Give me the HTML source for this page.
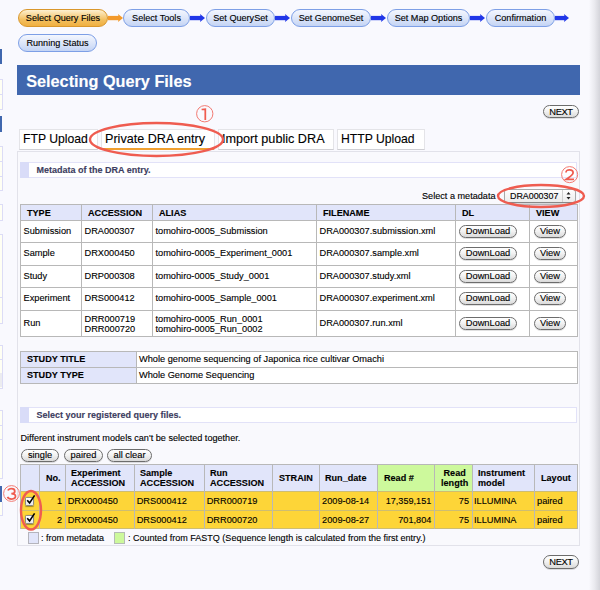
<!DOCTYPE html>
<html><head><meta charset="utf-8"><style>
html,body{margin:0;padding:0;}
body{width:600px;height:590px;overflow:hidden;position:relative;background:#f9f9fe;font-family:'Liberation Sans', sans-serif;}
div{box-sizing:content-box;-webkit-text-stroke:0.12px currentColor;}
</style></head><body>
<div style="position:absolute;left:0px;top:49px;width:2.4px;height:15px;background:#4067ae"></div><div style="position:absolute;left:0px;top:79px;width:2.4px;height:29px;background:#fffff4;border-right:1px solid #dcdcf6;border-top:1px solid #dcdcf6;border-bottom:1px solid #dcdcf6"></div><div style="position:absolute;left:0px;top:94px;width:2.4px;height:1px;background:#dcdcf6"></div><div style="position:absolute;left:0px;top:116px;width:2.4px;height:15.5px;background:#4067ae"></div><div style="position:absolute;left:0px;top:146px;width:2.4px;height:43px;background:#fffff4;border-right:1px solid #dcdcf6;border-top:1px solid #dcdcf6;border-bottom:1px solid #dcdcf6"></div><div style="position:absolute;left:0px;top:204px;width:2.4px;height:15px;background:#fffff4;border-right:1px solid #dcdcf6;border-top:1px solid #dcdcf6;border-bottom:1px solid #dcdcf6"></div><div style="position:absolute;left:0px;top:233.5px;width:2.4px;height:88.5px;background:#fffff4;border-right:1px solid #dcdcf6;border-top:1px solid #dcdcf6;border-bottom:1px solid #dcdcf6"></div><div style="position:absolute;left:0px;top:344.5px;width:2.4px;height:42.5px;background:#fffff4;border-right:1px solid #dcdcf6;border-top:1px solid #dcdcf6;border-bottom:1px solid #dcdcf6"></div><div style="position:absolute;left:0px;top:409.5px;width:2.4px;height:67.5px;background:#fffff4;border-right:1px solid #dcdcf6;border-top:1px solid #dcdcf6;border-bottom:1px solid #dcdcf6"></div><div style="position:absolute;left:0px;top:161px;width:2.4px;height:1px;background:#dcdcf6"></div><div style="position:absolute;left:0px;top:175.5px;width:2.4px;height:1px;background:#dcdcf6"></div><div style="position:absolute;left:0px;top:297px;width:2.4px;height:1px;background:#dcdcf6"></div><div style="position:absolute;left:0px;top:359px;width:2.4px;height:1px;background:#dcdcf6"></div><div style="position:absolute;left:0px;top:424.5px;width:2.4px;height:1px;background:#dcdcf6"></div><div style="position:absolute;left:0px;top:438.5px;width:2.4px;height:1px;background:#dcdcf6"></div><div style="position:absolute;left:0px;top:373px;width:2.4px;height:14px;background:#ececf0"></div><div style="position:absolute;left:0px;top:485.5px;width:2.4px;height:16px;background:#4067ae"></div><div style="position:absolute;left:0px;top:502px;width:2.4px;height:13px;background:#fffff4;border-right:1px solid #dcdcf6;border-bottom:1px solid #dcdcf6"></div><div style="position:absolute;left:18px;top:9px;width:88px;height:16px;border-radius:9.0px;background:linear-gradient(#fdf0d0,#f3c061 60%,#f0b040);border:1px solid #d9972c;font-size:9.1px;line-height:16px;text-align:center;color:#000;white-space:nowrap">Select Query Files</div><svg style="position:absolute;left:108px;top:12.8px" width="15" height="10"><rect x="0" y="2.9" width="11" height="4.3" fill="#f39a2c"/><path d="M10 0.9 L15 5 L10 9.1 L10.8 5 Z" fill="#f39a2c"/></svg><div style="position:absolute;left:123px;top:9px;width:65px;height:16px;border-radius:9.0px;background:linear-gradient(#f4f7fe,#d6e1f8 65%,#c4d4f4);border:1px solid #7d9fe6;font-size:9.1px;line-height:16px;text-align:center;color:#000;white-space:nowrap">Select Tools</div><svg style="position:absolute;left:190px;top:12.8px" width="15" height="10"><rect x="0" y="2.9" width="11" height="4.3" fill="#2137e8"/><path d="M10 0.9 L15 5 L10 9.1 L10.8 5 Z" fill="#2137e8"/></svg><div style="position:absolute;left:206px;top:9px;width:67px;height:16px;border-radius:9.0px;background:linear-gradient(#f4f7fe,#d6e1f8 65%,#c4d4f4);border:1px solid #7d9fe6;font-size:9.1px;line-height:16px;text-align:center;color:#000;white-space:nowrap">Set QuerySet</div><svg style="position:absolute;left:275px;top:12.8px" width="15" height="10"><rect x="0" y="2.9" width="11" height="4.3" fill="#2137e8"/><path d="M10 0.9 L15 5 L10 9.1 L10.8 5 Z" fill="#2137e8"/></svg><div style="position:absolute;left:291px;top:9px;width:78px;height:16px;border-radius:9.0px;background:linear-gradient(#f4f7fe,#d6e1f8 65%,#c4d4f4);border:1px solid #7d9fe6;font-size:9.1px;line-height:16px;text-align:center;color:#000;white-space:nowrap">Set GenomeSet</div><svg style="position:absolute;left:371px;top:12.8px" width="15" height="10"><rect x="0" y="2.9" width="11" height="4.3" fill="#2137e8"/><path d="M10 0.9 L15 5 L10 9.1 L10.8 5 Z" fill="#2137e8"/></svg><div style="position:absolute;left:387px;top:9px;width:81px;height:16px;border-radius:9.0px;background:linear-gradient(#f4f7fe,#d6e1f8 65%,#c4d4f4);border:1px solid #7d9fe6;font-size:9.1px;line-height:16px;text-align:center;color:#000;white-space:nowrap">Set Map Options</div><svg style="position:absolute;left:470px;top:12.8px" width="15" height="10"><rect x="0" y="2.9" width="11" height="4.3" fill="#2137e8"/><path d="M10 0.9 L15 5 L10 9.1 L10.8 5 Z" fill="#2137e8"/></svg><div style="position:absolute;left:486px;top:9px;width:67px;height:16px;border-radius:9.0px;background:linear-gradient(#f4f7fe,#d6e1f8 65%,#c4d4f4);border:1px solid #7d9fe6;font-size:9.1px;line-height:16px;text-align:center;color:#000;white-space:nowrap">Confirmation</div><svg style="position:absolute;left:555px;top:12.8px" width="14" height="10"><rect x="0" y="2.9" width="10" height="4.3" fill="#2137e8"/><path d="M9 0.9 L14 5 L9 9.1 L9.8 5 Z" fill="#2137e8"/></svg><div style="position:absolute;left:18px;top:34px;width:77px;height:16px;border-radius:9.0px;background:linear-gradient(#f4f7fe,#d6e1f8 65%,#c4d4f4);border:1px solid #7d9fe6;font-size:9.1px;line-height:16px;text-align:center;color:#000;white-space:nowrap">Running Status</div><div style="position:absolute;left:17px;top:65px;width:563px;height:30px;background:#4067ae"></div><div style="position:absolute;left:26.2px;top:73.4px;font-size:16.25px;line-height:16.25px;font-weight:bold;color:#fff;white-space:nowrap;">Selecting Query Files</div><div style="position:absolute;left:543px;top:105px;width:34px;height:11px;border-radius:6.5px;background:linear-gradient(#ffffff,#f3f3f3 45%,#dadada);border:1px solid #6c6c6c;box-shadow:0 1px 0 rgba(0,0,0,0.12);font-size:9.4px;line-height:11px;text-align:center;color:#000;white-space:nowrap"><span style="letter-spacing:-0.4px;position:relative;top:0.3px">NEXT</span></div><div style="position:absolute;left:19px;top:128.5px;width:74px;height:19px;background:#fff;border:1px solid #e4e4e8;border-bottom:1px solid #cfcfd4;font-size:12.2px;line-height:18px;padding-left:3px;box-sizing:content-box;color:#000;white-space:nowrap">FTP Upload</div><div style="position:absolute;left:101px;top:128.5px;width:109px;height:19px;background:#fff;border:1px solid #e4e4e8;border-bottom:1px solid #cfcfd4;font-size:12.6px;line-height:18px;padding-left:3px;box-sizing:content-box;color:#000;white-space:nowrap">Private DRA entry</div><div style="position:absolute;left:218px;top:128.5px;width:111px;height:19px;background:#fff;border:1px solid #e4e4e8;border-bottom:1px solid #cfcfd4;font-size:12.65px;line-height:18px;padding-left:3px;box-sizing:content-box;color:#000;white-space:nowrap">Import public DRA</div><div style="position:absolute;left:337px;top:128.5px;width:83px;height:19px;background:#fff;border:1px solid #e4e4e8;border-bottom:1px solid #cfcfd4;font-size:12.2px;line-height:18px;padding-left:3px;box-sizing:content-box;color:#000;white-space:nowrap">HTTP Upload</div><div style="position:absolute;left:102px;top:148px;width:112px;height:2px;background:#f0a030"></div><div style="position:absolute;left:17px;top:151px;width:561px;height:393px;border:1px solid #e2e2ea;background:#f9f9fd"></div><div style="position:absolute;left:20px;top:162px;width:555px;height:14px;background:#fff;border:1px solid #e2e2f8"></div><div style="position:absolute;left:20px;top:162px;width:9.3px;height:16px;background:#d9dcf8"></div><div style="position:absolute;left:36.5px;top:166.2px;font-size:9.0px;line-height:9.0px;font-weight:bold;color:#3c3c60;white-space:nowrap;">Metadata of the DRA entry.</div><div style="position:absolute;left:422px;top:191.5px;font-size:9.15px;line-height:9.15px;font-weight:normal;color:#000;white-space:nowrap;">Select a metadata</div><div style="position:absolute;left:504px;top:189px;width:70px;height:12px;border:1px solid #a8a8a8;border-bottom-color:#888;border-radius:3px;background:linear-gradient(#fdfdfd,#ececec);box-shadow:0 1px 1px rgba(0,0,0,0.15)"></div><div style="position:absolute;left:510px;top:191.5px;font-size:8.9px;line-height:8.9px;font-weight:normal;color:#000;white-space:nowrap;">DRA000307</div><div style="position:absolute;left:562px;top:190px;width:1px;height:12px;background:#d0d0d0"></div><svg style="position:absolute;left:565px;top:191px" width="8" height="10"><path d="M1.5 3.5 L3.5 1 L5.5 3.5Z M1.5 6 L3.5 8.5 L5.5 6Z" fill="#222"/></svg><div style="position:absolute;left:20px;top:204px;width:61px;height:16px;background:#e1e5fa"></div><div style="position:absolute;left:81px;top:204px;width:71px;height:16px;background:#e1e5fa"></div><div style="position:absolute;left:152px;top:204px;width:164px;height:16px;background:#e1e5fa"></div><div style="position:absolute;left:316px;top:204px;width:139px;height:16px;background:#e1e5fa"></div><div style="position:absolute;left:455px;top:204px;width:74px;height:16px;background:#e1e5fa"></div><div style="position:absolute;left:529px;top:204px;width:47.5px;height:16px;background:#e1e5fa"></div><div style="position:absolute;left:20px;top:220px;width:61px;height:22px;background:#fff"></div><div style="position:absolute;left:81px;top:220px;width:71px;height:22px;background:#fff"></div><div style="position:absolute;left:152px;top:220px;width:164px;height:22px;background:#fff"></div><div style="position:absolute;left:316px;top:220px;width:139px;height:22px;background:#fff"></div><div style="position:absolute;left:455px;top:220px;width:74px;height:22px;background:#fff"></div><div style="position:absolute;left:529px;top:220px;width:47.5px;height:22px;background:#fff"></div><div style="position:absolute;left:20px;top:242px;width:61px;height:23px;background:#fff"></div><div style="position:absolute;left:81px;top:242px;width:71px;height:23px;background:#fff"></div><div style="position:absolute;left:152px;top:242px;width:164px;height:23px;background:#fff"></div><div style="position:absolute;left:316px;top:242px;width:139px;height:23px;background:#fff"></div><div style="position:absolute;left:455px;top:242px;width:74px;height:23px;background:#fff"></div><div style="position:absolute;left:529px;top:242px;width:47.5px;height:23px;background:#fff"></div><div style="position:absolute;left:20px;top:265px;width:61px;height:22px;background:#fff"></div><div style="position:absolute;left:81px;top:265px;width:71px;height:22px;background:#fff"></div><div style="position:absolute;left:152px;top:265px;width:164px;height:22px;background:#fff"></div><div style="position:absolute;left:316px;top:265px;width:139px;height:22px;background:#fff"></div><div style="position:absolute;left:455px;top:265px;width:74px;height:22px;background:#fff"></div><div style="position:absolute;left:529px;top:265px;width:47.5px;height:22px;background:#fff"></div><div style="position:absolute;left:20px;top:287px;width:61px;height:23px;background:#fff"></div><div style="position:absolute;left:81px;top:287px;width:71px;height:23px;background:#fff"></div><div style="position:absolute;left:152px;top:287px;width:164px;height:23px;background:#fff"></div><div style="position:absolute;left:316px;top:287px;width:139px;height:23px;background:#fff"></div><div style="position:absolute;left:455px;top:287px;width:74px;height:23px;background:#fff"></div><div style="position:absolute;left:529px;top:287px;width:47.5px;height:23px;background:#fff"></div><div style="position:absolute;left:20px;top:310px;width:61px;height:26px;background:#fff"></div><div style="position:absolute;left:81px;top:310px;width:71px;height:26px;background:#fff"></div><div style="position:absolute;left:152px;top:310px;width:164px;height:26px;background:#fff"></div><div style="position:absolute;left:316px;top:310px;width:139px;height:26px;background:#fff"></div><div style="position:absolute;left:455px;top:310px;width:74px;height:26px;background:#fff"></div><div style="position:absolute;left:529px;top:310px;width:47.5px;height:26px;background:#fff"></div><div style="position:absolute;left:20px;top:204px;width:557.5px;height:1px;background:#b8b8b8"></div><div style="position:absolute;left:20px;top:220px;width:557.5px;height:1px;background:#b8b8b8"></div><div style="position:absolute;left:20px;top:242px;width:557.5px;height:1px;background:#b8b8b8"></div><div style="position:absolute;left:20px;top:265px;width:557.5px;height:1px;background:#b8b8b8"></div><div style="position:absolute;left:20px;top:287px;width:557.5px;height:1px;background:#b8b8b8"></div><div style="position:absolute;left:20px;top:310px;width:557.5px;height:1px;background:#b8b8b8"></div><div style="position:absolute;left:20px;top:336px;width:557.5px;height:1px;background:#b8b8b8"></div><div style="position:absolute;left:20px;top:204px;width:1px;height:133px;background:#b8b8b8"></div><div style="position:absolute;left:81px;top:204px;width:1px;height:133px;background:#b8b8b8"></div><div style="position:absolute;left:152px;top:204px;width:1px;height:133px;background:#b8b8b8"></div><div style="position:absolute;left:316px;top:204px;width:1px;height:133px;background:#b8b8b8"></div><div style="position:absolute;left:455px;top:204px;width:1px;height:133px;background:#b8b8b8"></div><div style="position:absolute;left:529px;top:204px;width:1px;height:133px;background:#b8b8b8"></div><div style="position:absolute;left:576.5px;top:204px;width:1px;height:133px;background:#b8b8b8"></div><div style="position:absolute;left:27px;top:209px;font-size:9.1px;line-height:9.1px;font-weight:bold;color:#000;white-space:nowrap;">TYPE</div><div style="position:absolute;left:88px;top:209px;font-size:9.1px;line-height:9.1px;font-weight:bold;color:#000;white-space:nowrap;">ACCESSION</div><div style="position:absolute;left:159px;top:209px;font-size:9.1px;line-height:9.1px;font-weight:bold;color:#000;white-space:nowrap;">ALIAS</div><div style="position:absolute;left:323px;top:209px;font-size:9.1px;line-height:9.1px;font-weight:bold;color:#000;white-space:nowrap;">FILENAME</div><div style="position:absolute;left:462px;top:209px;font-size:9.1px;line-height:9.1px;font-weight:bold;color:#000;white-space:nowrap;">DL</div><div style="position:absolute;left:536px;top:209px;font-size:9.1px;line-height:9.1px;font-weight:bold;color:#000;white-space:nowrap;">VIEW</div><div style="position:absolute;left:23.5px;top:226.9px;font-size:9.22px;line-height:9.22px;font-weight:normal;color:#000;white-space:nowrap;">Submission</div><div style="position:absolute;left:84.5px;top:226.9px;font-size:9.22px;line-height:9.22px;font-weight:normal;color:#000;white-space:nowrap;">DRA000307</div><div style="position:absolute;left:155.5px;top:226.9px;font-size:9.22px;line-height:9.22px;font-weight:normal;color:#000;white-space:nowrap;">tomohiro-0005_Submission</div><div style="position:absolute;left:319.5px;top:226.9px;font-size:9.22px;line-height:9.22px;font-weight:normal;color:#000;white-space:nowrap;">DRA000307.submission.xml</div><div style="position:absolute;left:459px;top:225px;width:56px;height:11px;border-radius:6.5px;background:linear-gradient(#ffffff,#f3f3f3 45%,#dadada);border:1px solid #6c6c6c;box-shadow:0 1px 0 rgba(0,0,0,0.12);font-size:9.3px;line-height:11px;text-align:center;color:#000;white-space:nowrap">DownLoad</div><div style="position:absolute;left:534px;top:225px;width:30px;height:11px;border-radius:6.5px;background:linear-gradient(#ffffff,#f3f3f3 45%,#dadada);border:1px solid #6c6c6c;box-shadow:0 1px 0 rgba(0,0,0,0.12);font-size:9.35px;line-height:11px;text-align:center;color:#000;white-space:nowrap">View</div><div style="position:absolute;left:23.5px;top:248.9px;font-size:9.22px;line-height:9.22px;font-weight:normal;color:#000;white-space:nowrap;">Sample</div><div style="position:absolute;left:84.5px;top:248.9px;font-size:9.22px;line-height:9.22px;font-weight:normal;color:#000;white-space:nowrap;">DRX000450</div><div style="position:absolute;left:155.5px;top:248.9px;font-size:9.22px;line-height:9.22px;font-weight:normal;color:#000;white-space:nowrap;">tomohiro-0005_Experiment_0001</div><div style="position:absolute;left:319.5px;top:248.9px;font-size:9.22px;line-height:9.22px;font-weight:normal;color:#000;white-space:nowrap;">DRA000307.sample.xml</div><div style="position:absolute;left:459px;top:247px;width:56px;height:11px;border-radius:6.5px;background:linear-gradient(#ffffff,#f3f3f3 45%,#dadada);border:1px solid #6c6c6c;box-shadow:0 1px 0 rgba(0,0,0,0.12);font-size:9.3px;line-height:11px;text-align:center;color:#000;white-space:nowrap">DownLoad</div><div style="position:absolute;left:534px;top:247px;width:30px;height:11px;border-radius:6.5px;background:linear-gradient(#ffffff,#f3f3f3 45%,#dadada);border:1px solid #6c6c6c;box-shadow:0 1px 0 rgba(0,0,0,0.12);font-size:9.35px;line-height:11px;text-align:center;color:#000;white-space:nowrap">View</div><div style="position:absolute;left:23.5px;top:271.9px;font-size:9.22px;line-height:9.22px;font-weight:normal;color:#000;white-space:nowrap;">Study</div><div style="position:absolute;left:84.5px;top:271.9px;font-size:9.22px;line-height:9.22px;font-weight:normal;color:#000;white-space:nowrap;">DRP000308</div><div style="position:absolute;left:155.5px;top:271.9px;font-size:9.22px;line-height:9.22px;font-weight:normal;color:#000;white-space:nowrap;">tomohiro-0005_Study_0001</div><div style="position:absolute;left:319.5px;top:271.9px;font-size:9.22px;line-height:9.22px;font-weight:normal;color:#000;white-space:nowrap;">DRA000307.study.xml</div><div style="position:absolute;left:459px;top:270px;width:56px;height:11px;border-radius:6.5px;background:linear-gradient(#ffffff,#f3f3f3 45%,#dadada);border:1px solid #6c6c6c;box-shadow:0 1px 0 rgba(0,0,0,0.12);font-size:9.3px;line-height:11px;text-align:center;color:#000;white-space:nowrap">DownLoad</div><div style="position:absolute;left:534px;top:270px;width:30px;height:11px;border-radius:6.5px;background:linear-gradient(#ffffff,#f3f3f3 45%,#dadada);border:1px solid #6c6c6c;box-shadow:0 1px 0 rgba(0,0,0,0.12);font-size:9.35px;line-height:11px;text-align:center;color:#000;white-space:nowrap">View</div><div style="position:absolute;left:23.5px;top:293.9px;font-size:9.22px;line-height:9.22px;font-weight:normal;color:#000;white-space:nowrap;">Experiment</div><div style="position:absolute;left:84.5px;top:293.9px;font-size:9.22px;line-height:9.22px;font-weight:normal;color:#000;white-space:nowrap;">DRS000412</div><div style="position:absolute;left:155.5px;top:293.9px;font-size:9.22px;line-height:9.22px;font-weight:normal;color:#000;white-space:nowrap;">tomohiro-0005_Sample_0001</div><div style="position:absolute;left:319.5px;top:293.9px;font-size:9.22px;line-height:9.22px;font-weight:normal;color:#000;white-space:nowrap;">DRA000307.experiment.xml</div><div style="position:absolute;left:459px;top:292px;width:56px;height:11px;border-radius:6.5px;background:linear-gradient(#ffffff,#f3f3f3 45%,#dadada);border:1px solid #6c6c6c;box-shadow:0 1px 0 rgba(0,0,0,0.12);font-size:9.3px;line-height:11px;text-align:center;color:#000;white-space:nowrap">DownLoad</div><div style="position:absolute;left:534px;top:292px;width:30px;height:11px;border-radius:6.5px;background:linear-gradient(#ffffff,#f3f3f3 45%,#dadada);border:1px solid #6c6c6c;box-shadow:0 1px 0 rgba(0,0,0,0.12);font-size:9.35px;line-height:11px;text-align:center;color:#000;white-space:nowrap">View</div><div style="position:absolute;left:23.5px;top:318.5px;font-size:9.22px;line-height:9.22px;font-weight:normal;color:#000;white-space:nowrap;">Run</div><div style="position:absolute;left:84.5px;top:313.5px;font-size:9.22px;line-height:9.22px;font-weight:normal;color:#000;white-space:nowrap;line-height:10px">DRR000719<br>DRR000720</div><div style="position:absolute;left:155.5px;top:313.5px;font-size:9.22px;line-height:9.22px;font-weight:normal;color:#000;white-space:nowrap;line-height:10px">tomohiro-0005_Run_0001<br>tomohiro-0005_Run_0002</div><div style="position:absolute;left:319.5px;top:318.5px;font-size:9.22px;line-height:9.22px;font-weight:normal;color:#000;white-space:nowrap;">DRA000307.run.xml</div><div style="position:absolute;left:459px;top:317px;width:56px;height:11px;border-radius:6.5px;background:linear-gradient(#ffffff,#f3f3f3 45%,#dadada);border:1px solid #6c6c6c;box-shadow:0 1px 0 rgba(0,0,0,0.12);font-size:9.3px;line-height:11px;text-align:center;color:#000;white-space:nowrap">DownLoad</div><div style="position:absolute;left:534px;top:317px;width:30px;height:11px;border-radius:6.5px;background:linear-gradient(#ffffff,#f3f3f3 45%,#dadada);border:1px solid #6c6c6c;box-shadow:0 1px 0 rgba(0,0,0,0.12);font-size:9.35px;line-height:11px;text-align:center;color:#000;white-space:nowrap">View</div><div style="position:absolute;left:20px;top:351px;width:116px;height:16px;background:#e1e5fa"></div><div style="position:absolute;left:136px;top:351px;width:440.5px;height:16px;background:#fff"></div><div style="position:absolute;left:20px;top:367px;width:116px;height:16px;background:#e1e5fa"></div><div style="position:absolute;left:136px;top:367px;width:440.5px;height:16px;background:#fff"></div><div style="position:absolute;left:20px;top:351px;width:557.5px;height:1px;background:#b8b8b8"></div><div style="position:absolute;left:20px;top:367px;width:557.5px;height:1px;background:#b8b8b8"></div><div style="position:absolute;left:20px;top:383px;width:557.5px;height:1px;background:#b8b8b8"></div><div style="position:absolute;left:20px;top:351px;width:1px;height:33px;background:#b8b8b8"></div><div style="position:absolute;left:136px;top:351px;width:1px;height:33px;background:#b8b8b8"></div><div style="position:absolute;left:576.5px;top:351px;width:1px;height:33px;background:#b8b8b8"></div><div style="position:absolute;left:27px;top:355px;font-size:9.1px;line-height:9.1px;font-weight:bold;color:#000;white-space:nowrap;">STUDY TITLE</div><div style="position:absolute;left:27px;top:371px;font-size:9.1px;line-height:9.1px;font-weight:bold;color:#000;white-space:nowrap;">STUDY TYPE</div><div style="position:absolute;left:139px;top:355px;font-size:9.22px;line-height:9.22px;font-weight:normal;color:#000;white-space:nowrap;">Whole genome sequencing of Japonica rice cultivar Omachi</div><div style="position:absolute;left:139px;top:371px;font-size:9.22px;line-height:9.22px;font-weight:normal;color:#000;white-space:nowrap;">Whole Genome Sequencing</div><div style="position:absolute;left:20px;top:407px;width:555px;height:14px;background:#fff;border:1px solid #e2e2f8"></div><div style="position:absolute;left:20px;top:407px;width:9.3px;height:16px;background:#d9dcf8"></div><div style="position:absolute;left:36.5px;top:411.2px;font-size:9.0px;line-height:9.0px;font-weight:bold;color:#3c3c60;white-space:nowrap;">Select your registered query files.</div><div style="position:absolute;left:20.5px;top:433.5px;font-size:9.12px;line-height:9.12px;font-weight:normal;color:#000;white-space:nowrap;">Different instrument models can't be selected together.</div><div style="position:absolute;left:21px;top:449px;width:36px;height:11px;border-radius:6.5px;background:linear-gradient(#ffffff,#f3f3f3 45%,#dadada);border:1px solid #6c6c6c;box-shadow:0 1px 0 rgba(0,0,0,0.12);font-size:9.25px;line-height:11px;text-align:center;color:#000;white-space:nowrap">single</div><div style="position:absolute;left:64px;top:449px;width:37px;height:11px;border-radius:6.5px;background:linear-gradient(#ffffff,#f3f3f3 45%,#dadada);border:1px solid #6c6c6c;box-shadow:0 1px 0 rgba(0,0,0,0.12);font-size:9.3px;line-height:11px;text-align:center;color:#000;white-space:nowrap">paired</div><div style="position:absolute;left:107px;top:449px;width:43px;height:11px;border-radius:6.5px;background:linear-gradient(#ffffff,#f3f3f3 45%,#dadada);border:1px solid #6c6c6c;box-shadow:0 1px 0 rgba(0,0,0,0.12);font-size:9.3px;line-height:11px;text-align:center;color:#000;white-space:nowrap">all clear</div><div style="position:absolute;left:20px;top:464px;width:19px;height:27px;background:#e1e5fa"></div><div style="position:absolute;left:39px;top:464px;width:26px;height:27px;background:#e1e5fa"></div><div style="position:absolute;left:65px;top:464px;width:69px;height:27px;background:#e1e5fa"></div><div style="position:absolute;left:134px;top:464px;width:70px;height:27px;background:#e1e5fa"></div><div style="position:absolute;left:204px;top:464px;width:68px;height:27px;background:#e1e5fa"></div><div style="position:absolute;left:272px;top:464px;width:47px;height:27px;background:#e1e5fa"></div><div style="position:absolute;left:319px;top:464px;width:58px;height:27px;background:#e1e5fa"></div><div style="position:absolute;left:377px;top:464px;width:57.30000000000001px;height:27px;background:#cdf99c"></div><div style="position:absolute;left:434.3px;top:464px;width:37.69999999999999px;height:27px;background:#cdf99c"></div><div style="position:absolute;left:472px;top:464px;width:62px;height:27px;background:#e1e5fa"></div><div style="position:absolute;left:534px;top:464px;width:42.5px;height:27px;background:#e1e5fa"></div><div style="position:absolute;left:20px;top:491px;width:19px;height:19px;background:#fdd538"></div><div style="position:absolute;left:39px;top:491px;width:26px;height:19px;background:#fdd538"></div><div style="position:absolute;left:65px;top:491px;width:69px;height:19px;background:#fdd538"></div><div style="position:absolute;left:134px;top:491px;width:70px;height:19px;background:#fdd538"></div><div style="position:absolute;left:204px;top:491px;width:68px;height:19px;background:#fdd538"></div><div style="position:absolute;left:272px;top:491px;width:47px;height:19px;background:#fdd538"></div><div style="position:absolute;left:319px;top:491px;width:58px;height:19px;background:#fdd538"></div><div style="position:absolute;left:377px;top:491px;width:57.30000000000001px;height:19px;background:#fdd538"></div><div style="position:absolute;left:434.3px;top:491px;width:37.69999999999999px;height:19px;background:#fdd538"></div><div style="position:absolute;left:472px;top:491px;width:62px;height:19px;background:#fdd538"></div><div style="position:absolute;left:534px;top:491px;width:42.5px;height:19px;background:#fdd538"></div><div style="position:absolute;left:20px;top:510px;width:19px;height:18px;background:#fdd538"></div><div style="position:absolute;left:39px;top:510px;width:26px;height:18px;background:#fdd538"></div><div style="position:absolute;left:65px;top:510px;width:69px;height:18px;background:#fdd538"></div><div style="position:absolute;left:134px;top:510px;width:70px;height:18px;background:#fdd538"></div><div style="position:absolute;left:204px;top:510px;width:68px;height:18px;background:#fdd538"></div><div style="position:absolute;left:272px;top:510px;width:47px;height:18px;background:#fdd538"></div><div style="position:absolute;left:319px;top:510px;width:58px;height:18px;background:#fdd538"></div><div style="position:absolute;left:377px;top:510px;width:57.30000000000001px;height:18px;background:#fdd538"></div><div style="position:absolute;left:434.3px;top:510px;width:37.69999999999999px;height:18px;background:#fdd538"></div><div style="position:absolute;left:472px;top:510px;width:62px;height:18px;background:#fdd538"></div><div style="position:absolute;left:534px;top:510px;width:42.5px;height:18px;background:#fdd538"></div><div style="position:absolute;left:20px;top:464px;width:557.5px;height:1px;background:#b8b8b8"></div><div style="position:absolute;left:20px;top:491px;width:557.5px;height:1px;background:#b8b8b8"></div><div style="position:absolute;left:20px;top:510px;width:557.5px;height:1px;background:#b8b8b8"></div><div style="position:absolute;left:20px;top:528px;width:557.5px;height:1px;background:#b8b8b8"></div><div style="position:absolute;left:20px;top:464px;width:1px;height:65px;background:#b8b8b8"></div><div style="position:absolute;left:39px;top:464px;width:1px;height:65px;background:#b8b8b8"></div><div style="position:absolute;left:65px;top:464px;width:1px;height:65px;background:#b8b8b8"></div><div style="position:absolute;left:134px;top:464px;width:1px;height:65px;background:#b8b8b8"></div><div style="position:absolute;left:204px;top:464px;width:1px;height:65px;background:#b8b8b8"></div><div style="position:absolute;left:272px;top:464px;width:1px;height:65px;background:#b8b8b8"></div><div style="position:absolute;left:319px;top:464px;width:1px;height:65px;background:#b8b8b8"></div><div style="position:absolute;left:377px;top:464px;width:1px;height:65px;background:#b8b8b8"></div><div style="position:absolute;left:434.3px;top:464px;width:1px;height:65px;background:#b8b8b8"></div><div style="position:absolute;left:472px;top:464px;width:1px;height:65px;background:#b8b8b8"></div><div style="position:absolute;left:534px;top:464px;width:1px;height:65px;background:#b8b8b8"></div><div style="position:absolute;left:576.5px;top:464px;width:1px;height:65px;background:#b8b8b8"></div><div style="position:absolute;left:21px;top:491px;width:18px;height:1px;background:#cdbd72"></div><div style="position:absolute;left:40px;top:491px;width:25px;height:1px;background:#cdbd72"></div><div style="position:absolute;left:66px;top:491px;width:68px;height:1px;background:#cdbd72"></div><div style="position:absolute;left:135px;top:491px;width:69px;height:1px;background:#cdbd72"></div><div style="position:absolute;left:205px;top:491px;width:67px;height:1px;background:#cdbd72"></div><div style="position:absolute;left:273px;top:491px;width:46px;height:1px;background:#cdbd72"></div><div style="position:absolute;left:320px;top:491px;width:57px;height:1px;background:#cdbd72"></div><div style="position:absolute;left:378px;top:491px;width:56.30000000000001px;height:1px;background:#cdbd72"></div><div style="position:absolute;left:435.3px;top:491px;width:36.69999999999999px;height:1px;background:#cdbd72"></div><div style="position:absolute;left:473px;top:491px;width:61px;height:1px;background:#cdbd72"></div><div style="position:absolute;left:535px;top:491px;width:41.5px;height:1px;background:#cdbd72"></div><div style="position:absolute;left:21px;top:510px;width:18px;height:1px;background:#cdbd72"></div><div style="position:absolute;left:40px;top:510px;width:25px;height:1px;background:#cdbd72"></div><div style="position:absolute;left:66px;top:510px;width:68px;height:1px;background:#cdbd72"></div><div style="position:absolute;left:135px;top:510px;width:69px;height:1px;background:#cdbd72"></div><div style="position:absolute;left:205px;top:510px;width:67px;height:1px;background:#cdbd72"></div><div style="position:absolute;left:273px;top:510px;width:46px;height:1px;background:#cdbd72"></div><div style="position:absolute;left:320px;top:510px;width:57px;height:1px;background:#cdbd72"></div><div style="position:absolute;left:378px;top:510px;width:56.30000000000001px;height:1px;background:#cdbd72"></div><div style="position:absolute;left:435.3px;top:510px;width:36.69999999999999px;height:1px;background:#cdbd72"></div><div style="position:absolute;left:473px;top:510px;width:61px;height:1px;background:#cdbd72"></div><div style="position:absolute;left:535px;top:510px;width:41.5px;height:1px;background:#cdbd72"></div><div style="position:absolute;left:21px;top:528px;width:18px;height:1px;background:#cdbd72"></div><div style="position:absolute;left:40px;top:528px;width:25px;height:1px;background:#cdbd72"></div><div style="position:absolute;left:66px;top:528px;width:68px;height:1px;background:#cdbd72"></div><div style="position:absolute;left:135px;top:528px;width:69px;height:1px;background:#cdbd72"></div><div style="position:absolute;left:205px;top:528px;width:67px;height:1px;background:#cdbd72"></div><div style="position:absolute;left:273px;top:528px;width:46px;height:1px;background:#cdbd72"></div><div style="position:absolute;left:320px;top:528px;width:57px;height:1px;background:#cdbd72"></div><div style="position:absolute;left:378px;top:528px;width:56.30000000000001px;height:1px;background:#cdbd72"></div><div style="position:absolute;left:435.3px;top:528px;width:36.69999999999999px;height:1px;background:#cdbd72"></div><div style="position:absolute;left:473px;top:528px;width:61px;height:1px;background:#cdbd72"></div><div style="position:absolute;left:535px;top:528px;width:41.5px;height:1px;background:#cdbd72"></div><div style="position:absolute;left:71px;top:468px;font-size:9.1px;line-height:9.1px;font-weight:bold;color:#000;white-space:nowrap;line-height:10px">Experiment<br>ACCESSION</div><div style="position:absolute;left:140px;top:468px;font-size:9.1px;line-height:9.1px;font-weight:bold;color:#000;white-space:nowrap;line-height:10px">Sample<br>ACCESSION</div><div style="position:absolute;left:210px;top:468px;font-size:9.1px;line-height:9.1px;font-weight:bold;color:#000;white-space:nowrap;line-height:10px">Run<br>ACCESSION</div><div style="position:absolute;left:46px;top:473.6px;font-size:9.1px;line-height:9.1px;font-weight:bold;color:#000;white-space:nowrap;">No.</div><div style="position:absolute;left:279px;top:473.6px;font-size:9.1px;line-height:9.1px;font-weight:bold;color:#000;white-space:nowrap;">STRAIN</div><div style="position:absolute;left:325px;top:473.6px;font-size:9.1px;line-height:9.1px;font-weight:bold;color:#000;white-space:nowrap;">Run_date</div><div style="position:absolute;left:384px;top:473.6px;font-size:9.1px;line-height:9.1px;font-weight:bold;color:#000;white-space:nowrap;">Read #</div><div style="position:absolute;left:441px;top:468px;font-size:9.1px;line-height:9.1px;font-weight:bold;color:#000;white-space:nowrap;line-height:10px;text-align:center">Read<br>length</div><div style="position:absolute;left:478px;top:468px;font-size:9.1px;line-height:9.1px;font-weight:bold;color:#000;white-space:nowrap;line-height:10px">Instrument<br>model</div><div style="position:absolute;left:541px;top:473.6px;font-size:9.1px;line-height:9.1px;font-weight:bold;color:#000;white-space:nowrap;">Layout</div><div style="position:absolute;left:25px;top:496.5px;width:7px;height:7px;background:linear-gradient(#fff,#e9e9e9);border:1px solid #8a8a8a;border-radius:1.5px;box-shadow:0 0.5px 1px rgba(0,0,0,0.35)"></div><svg style="position:absolute;left:24px;top:493.5px" width="13" height="12"><path d="M3.2 6.2 L5.6 8.9 L10.6 1.4" stroke="#000" stroke-width="1.6" fill="none"/></svg><div style="position:absolute;left:39px;width:23px;top:497px;font-size:9.15px;line-height:9.15px;text-align:right;color:#000">1</div><div style="position:absolute;left:67.7px;top:497px;font-size:9.22px;line-height:9.22px;font-weight:normal;color:#000;white-space:nowrap;">DRX000450</div><div style="position:absolute;left:136.7px;top:497px;font-size:9.22px;line-height:9.22px;font-weight:normal;color:#000;white-space:nowrap;">DRS000412</div><div style="position:absolute;left:206.7px;top:497px;font-size:9.22px;line-height:9.22px;font-weight:normal;color:#000;white-space:nowrap;">DRR000719</div><div style="position:absolute;left:322px;top:497px;font-size:9.22px;line-height:9.22px;font-weight:normal;color:#000;white-space:nowrap;">2009-08-14</div><div style="position:absolute;left:377px;width:54.30000000000001px;top:497px;font-size:9.15px;line-height:9.15px;text-align:right;color:#000">17,359,151</div><div style="position:absolute;left:434.3px;width:34.69999999999999px;top:497px;font-size:9.15px;line-height:9.15px;text-align:right;color:#000">75</div><div style="position:absolute;left:474px;top:497px;font-size:9.22px;line-height:9.22px;font-weight:normal;color:#000;white-space:nowrap;">ILLUMINA</div><div style="position:absolute;left:537px;top:497px;font-size:9.22px;line-height:9.22px;font-weight:normal;color:#000;white-space:nowrap;">paired</div><div style="position:absolute;left:25px;top:515px;width:7px;height:7px;background:linear-gradient(#fff,#e9e9e9);border:1px solid #8a8a8a;border-radius:1.5px;box-shadow:0 0.5px 1px rgba(0,0,0,0.35)"></div><svg style="position:absolute;left:24px;top:512px" width="13" height="12"><path d="M3.2 6.2 L5.6 8.9 L10.6 1.4" stroke="#000" stroke-width="1.6" fill="none"/></svg><div style="position:absolute;left:39px;width:23px;top:516px;font-size:9.15px;line-height:9.15px;text-align:right;color:#000">2</div><div style="position:absolute;left:67.7px;top:516px;font-size:9.22px;line-height:9.22px;font-weight:normal;color:#000;white-space:nowrap;">DRX000450</div><div style="position:absolute;left:136.7px;top:516px;font-size:9.22px;line-height:9.22px;font-weight:normal;color:#000;white-space:nowrap;">DRS000412</div><div style="position:absolute;left:206.7px;top:516px;font-size:9.22px;line-height:9.22px;font-weight:normal;color:#000;white-space:nowrap;">DRR000720</div><div style="position:absolute;left:322px;top:516px;font-size:9.22px;line-height:9.22px;font-weight:normal;color:#000;white-space:nowrap;">2009-08-27</div><div style="position:absolute;left:377px;width:54.30000000000001px;top:516px;font-size:9.15px;line-height:9.15px;text-align:right;color:#000">701,804</div><div style="position:absolute;left:434.3px;width:34.69999999999999px;top:516px;font-size:9.15px;line-height:9.15px;text-align:right;color:#000">75</div><div style="position:absolute;left:474px;top:516px;font-size:9.22px;line-height:9.22px;font-weight:normal;color:#000;white-space:nowrap;">ILLUMINA</div><div style="position:absolute;left:537px;top:516px;font-size:9.22px;line-height:9.22px;font-weight:normal;color:#000;white-space:nowrap;">paired</div><div style="position:absolute;left:28px;top:532px;width:8.7px;height:10px;background:#e1e5fa;border:1px solid #b4b4bc"></div><div style="position:absolute;left:41px;top:534px;font-size:9.0px;line-height:9.0px;font-weight:normal;color:#000;white-space:nowrap;">: from metadata</div><div style="position:absolute;left:114px;top:532px;width:9.3px;height:10px;background:#cdf99c;border:1px solid #b4bcb4"></div><div style="position:absolute;left:128px;top:534px;font-size:9.04px;line-height:9.04px;font-weight:normal;color:#000;white-space:nowrap;">: Counted from FASTQ (Sequence length is calculated from the first entry.)</div><div style="position:absolute;left:543px;top:555px;width:34px;height:12px;border-radius:7.0px;background:linear-gradient(#ffffff,#f3f3f3 45%,#dadada);border:1px solid #6c6c6c;box-shadow:0 1px 0 rgba(0,0,0,0.12);font-size:9.4px;line-height:12px;text-align:center;color:#000;white-space:nowrap"><span style="letter-spacing:-0.4px;position:relative;top:0.3px">NEXT</span></div><svg style="position:absolute;left:87px;top:120px" width="139" height="39"><ellipse cx="69.5" cy="19.5" rx="66.5" ry="16.5" stroke="#ef5c50" stroke-width="2.4" fill="none"/></svg><svg style="position:absolute;left:195.75px;top:104.5px" width="18.5" height="18.5"><circle cx="8.75" cy="8.75" r="8.15" stroke="#f27a72" stroke-width="1" fill="none"/><path d="M5.6 4.5 L9.3 4.1 L9.3 15" stroke="#ef5c50" stroke-width="1.75" fill="none"/></svg><svg style="position:absolute;left:495px;top:182px" width="92" height="28"><ellipse cx="46.0" cy="14.0" rx="43.0" ry="11.0" stroke="#ef5c50" stroke-width="2.4" fill="none"/></svg><svg style="position:absolute;left:560.5px;top:166.25px" width="18.25" height="18.25"><circle cx="8.625" cy="8.625" r="8.025" stroke="#f27a72" stroke-width="1" fill="none"/><path d="M5.0 6.6 C5.0 4.4 6.6 3.8 8.6 3.8 C10.8 3.8 12.1 4.9 12.1 6.7 C12.1 9.0 9.2 10.4 5.2 13.3 L13.0 13.3" stroke="#ef5c50" stroke-width="1.75" fill="none"/></svg><svg style="position:absolute;left:17.5px;top:487.5px" width="26.0" height="44.5"><ellipse cx="13.0" cy="22.25" rx="10.0" ry="19.25" stroke="#ef5c50" stroke-width="2.4" fill="none"/></svg><svg style="position:absolute;left:3px;top:485.1px" width="18" height="18"><circle cx="8.5" cy="8.5" r="7.9" stroke="#f27a72" stroke-width="1" fill="none"/><path d="M5.0 5.6 C5.5 4.0 6.8 3.6 8.5 3.6 C10.5 3.6 11.8 4.7 11.8 6.2 C11.8 7.8 10.4 8.6 8.3 8.6 C10.8 8.6 12.5 9.6 12.5 11.3 C12.5 13.0 11.0 14.0 8.6 14.0 C6.6 14.0 5.1 13.3 4.5 11.9" stroke="#ef5c50" stroke-width="1.75" fill="none"/></svg><div style="position:absolute;left:589px;top:0px;width:11px;height:590px;background:linear-gradient(90deg,rgba(215,215,220,0),rgba(218,218,223,0.5) 50%,rgba(212,212,218,1))"></div>
</body></html>
